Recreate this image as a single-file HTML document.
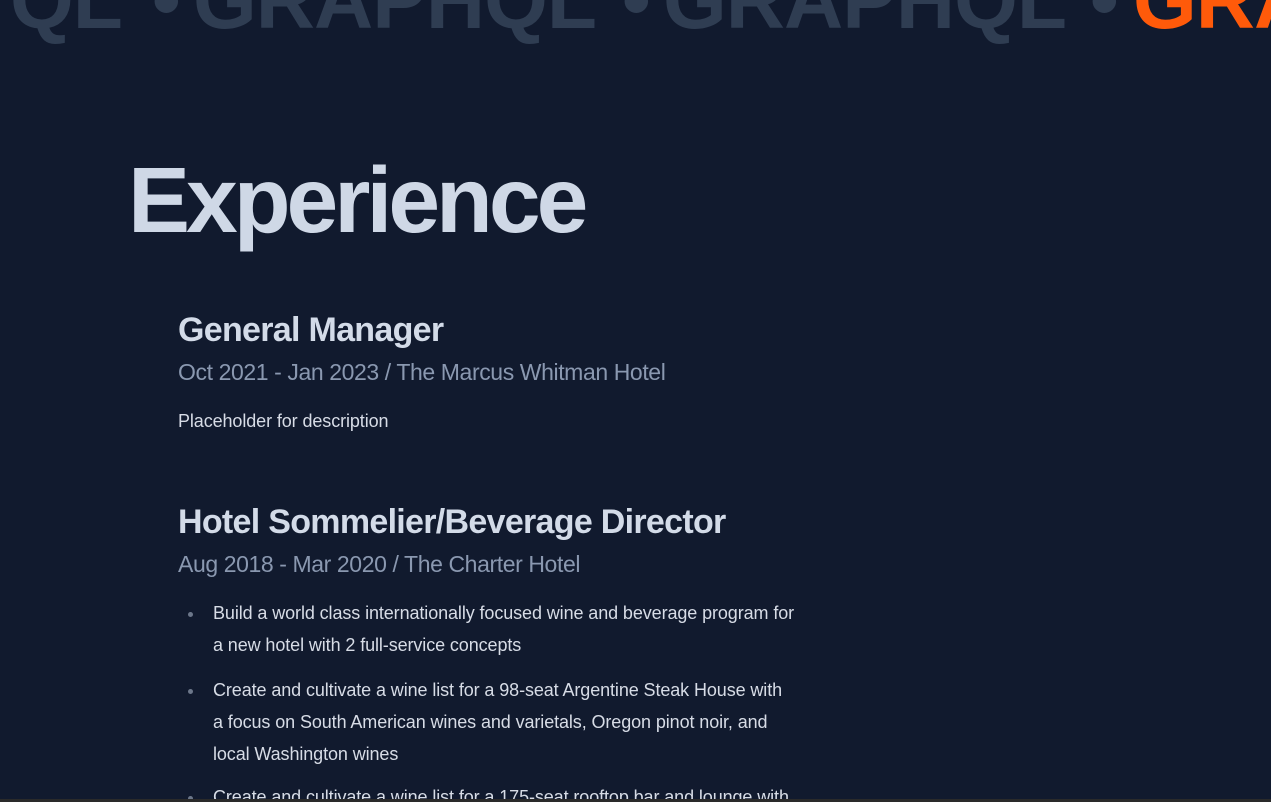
<!DOCTYPE html>
<html><head><meta charset="utf-8"><style>
html,body{margin:0;padding:0;width:1271px;height:802px;overflow:hidden;background:#111a2e;font-family:"Liberation Sans",sans-serif;}
.a{position:absolute;white-space:nowrap;}
.band{font-weight:bold;font-size:82px;color:#2f3d52;top:-40px;line-height:82px;letter-spacing:-1px;}
h1{margin:0;font-size:93px;font-weight:bold;color:#cfd8e6;letter-spacing:-4px;line-height:92px;}
.h{font-size:34px;font-weight:bold;color:#d3dbe8;letter-spacing:-0.7px;line-height:40px;}
.s{font-size:23px;color:#8a98b0;letter-spacing:-0.4px;line-height:28px;}
.p{font-size:18px;color:#d7dce6;letter-spacing:-0.1px;line-height:32px;}
.b{position:absolute;width:5px;height:5px;border-radius:50%;background:#6c778a;}
</style></head><body>
<div class="a band" style="left:10px">QL</div>
<div class="a band" style="left:152px">•</div>
<div class="a band" style="left:193px">GRAPHQL</div>
<div class="a band" style="left:622px">•</div>
<div class="a band" style="left:663px">GRAPHQL</div>
<div class="a band" style="left:1090px">•</div>
<div class="a band" style="left:1133px;color:#ff5a0a">GRA</div>

<div class="a" style="left:128px;top:154px"><h1>Experience</h1></div>

<div class="a h" style="left:178px;top:310px">General Manager</div>
<div class="a s" style="left:178px;top:358px">Oct 2021 - Jan 2023 / The Marcus Whitman Hotel</div>
<div class="a p" style="left:178px;top:405px">Placeholder for description</div>

<div class="a h" style="left:178px;top:502px">Hotel Sommelier/Beverage Director</div>
<div class="a s" style="left:178px;top:550px">Aug 2018 - Mar 2020 / The Charter Hotel</div>

<div class="b" style="left:188px;top:612px"></div>
<div class="a p" style="left:213px;top:597px">Build a world class internationally focused wine and beverage program for<br>a new hotel with 2 full-service concepts</div>
<div class="b" style="left:188px;top:689px"></div>
<div class="a p" style="left:213px;top:674px">Create and cultivate a wine list for a 98-seat Argentine Steak House with<br>a focus on South American wines and varietals, Oregon pinot noir, and<br>local Washington wines</div>
<div class="b" style="left:188px;top:796px"></div>
<div class="a p" style="left:213px;top:781px;height:18px;overflow:hidden">Create and cultivate a wine list for a 175-seat rooftop bar and lounge with</div>
<div class="a" style="left:0;top:799px;width:1271px;height:3px;background:#2a2a2a"></div>
</body></html>
